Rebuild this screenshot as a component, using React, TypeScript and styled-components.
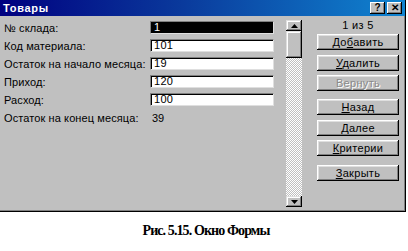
import React from "react";
import styled, { createGlobalStyle } from "styled-components";

const GlobalStyle = createGlobalStyle`
  body {
    margin: 0;
    background: #ffffff;
    font-family: "Liberation Sans", Arial, sans-serif;
  }
`;

const Page = styled.div`
  width: 408px;
  height: 251px;
  display: flex;
  flex-direction: column;
`;

const Window = styled.div`
  width: 406px;
  height: 212px;
  box-sizing: border-box;
  background: #c0c0c0;
  border-right: 1px solid #000;
  border-bottom: 1px solid #000;
  box-shadow: inset -1px -1px #808080;
  display: flex;
  flex-direction: column;
`;

const TitleBar = styled.div`
  height: 16px;
  flex-shrink: 0;
  background: linear-gradient(to right, #000080 0%, #0a3a9c 45%, #1084d0 100%);
  display: flex;
  align-items: center;
  justify-content: space-between;
  padding: 0 3px 0 3px;
`;

const Title = styled.span`
  color: #fff;
  font-weight: bold;
  font-size: 11px;
  letter-spacing: 0.7px;
`;

const TitleButtons = styled.div`
  display: flex;
  gap: 2px;
`;

const TitleButton = styled.div`
  width: 15px;
  height: 12px;
  box-sizing: border-box;
  background: #c0c0c0;
  box-shadow: inset -1px -1px #000, inset 1px 1px #fff, inset -2px -2px #808080;
  display: flex;
  align-items: center;
  justify-content: center;
  font-size: 10px;
  font-weight: bold;
  line-height: 1;
  color: #000;
`;

const Body = styled.div`
  flex: 1;
  display: flex;
  padding: 4px 0 0 4px;
`;

const Form = styled.div`
  display: grid;
  grid-template-columns: 146px 124px;
  grid-auto-rows: 13px;
  row-gap: 5px;
  margin-top: 1px;
  align-items: center;
  align-content: start;
`;

const Label = styled.span`
  font-size: 11px;
  letter-spacing: 0.1px;
  color: #000;
  white-space: nowrap;
`;

const Value = styled.span`
  font-size: 11px;
  color: #000;
  padding-left: 2px;
`;

const Field = styled.div<{ $selected?: boolean }>`
  height: 13px;
  box-sizing: border-box;
  background: ${(p) => (p.$selected ? "#000" : "#fff")};
  color: ${(p) => (p.$selected ? "#fff" : "#000")};
  border-top: 1px solid #808080;
  border-left: 1px solid #808080;
  border-right: 1px solid #dfdfdf;
  border-bottom: 1px solid #dfdfdf;
  box-shadow: inset 1px 1px #000;
  display: flex;
  align-items: center;
  font-size: 11px;
  line-height: 11px;
  letter-spacing: 0.3px;
  padding-left: 3px;
  white-space: nowrap;
`;

const Scroll = styled.div`
  margin-left: 12px;
  width: 16px;
  height: 187px;
  display: flex;
  flex-direction: column;
  background: repeating-conic-gradient(#c0c0c0 0% 25%, #ffffff 0% 50%) 0 0 / 2px 2px;
`;

const ScrollPart = styled.div<{ $h: number }>`
  height: ${(p) => p.$h}px;
  flex-shrink: 0;
  box-sizing: border-box;
  background: #c0c0c0;
  box-shadow: inset -1px -1px #000, inset 1px 1px #dfdfdf, inset -2px -2px #808080, inset 2px 2px #fff;
  display: flex;
  align-items: center;
  justify-content: center;
`;

const Spacer = styled.div`
  flex: 1;
`;

const Buttons = styled.div`
  margin-left: 15px;
  width: 82px;
  display: flex;
  flex-direction: column;
`;

const Counter = styled.div`
  height: 10px;
  line-height: 10px;
  font-size: 11px;
  letter-spacing: 0.3px;
  text-align: center;
  color: #000;
`;

const Button = styled.div<{ $gap: number; $disabled?: boolean }>`
  margin-top: ${(p) => p.$gap}px;
  height: 16px;
  box-sizing: border-box;
  background: #c0c0c0;
  box-shadow: inset -1px -1px #000, inset 1px 1px #fff, inset -2px -2px #808080, inset 2px 2px #dfdfdf;
  display: flex;
  align-items: center;
  justify-content: center;
  font-size: 11px;
  letter-spacing: 0.3px;
  color: ${(p) => (p.$disabled ? "#8a8a8a" : "#000")};
  text-shadow: ${(p) => (p.$disabled ? "1px 1px #fff" : "none")};
  u {
    text-decoration: underline;
    text-underline-offset: 1px;
  }
`;

const Caption = styled.div`
  margin-top: 11px;
  text-align: center;
  padding-left: 4px;
  font-family: "Liberation Serif", "Times New Roman", serif;
  font-weight: bold;
  font-size: 14px;
  letter-spacing: -0.9px;
  color: #000;
`;

const Arrow = ({ up }: { up?: boolean }) => (
  <svg width="7" height="4" viewBox="0 0 7 4">
    <path d={up ? "M3.5 0 L7 4 L0 4 Z" : "M0 0 L7 0 L3.5 4 Z"} fill="#000" />
  </svg>
);

const fields = [
  { label: "№ склада:", value: "1", selected: true },
  { label: "Код материала:", value: "101" },
  { label: "Остаток на начало месяца:", value: "19" },
  { label: "Приход:", value: "120" },
  { label: "Расход:", value: "100" },
];

const buttons: { pre: string; key: string; post: string; gap: number; disabled?: boolean }[] = [
  { pre: "До", key: "б", post: "авить", gap: 4 },
  { pre: "", key: "У", post: "далить", gap: 5 },
  { pre: "Вернуть", key: "", post: "", gap: 4, disabled: true },
  { pre: "", key: "Н", post: "азад", gap: 8 },
  { pre: "", key: "Д", post: "алее", gap: 5 },
  { pre: "", key: "К", post: "ритерии", gap: 4 },
  { pre: "", key: "З", post: "акрыть", gap: 9 },
];

const App = () => {
  return (
    <Page>
      <GlobalStyle />
      <Window>
        <TitleBar>
          <Title>Товары</Title>
          <TitleButtons>
            <TitleButton>?</TitleButton>
            <TitleButton>✕</TitleButton>
          </TitleButtons>
        </TitleBar>
        <Body>
          <Form>
            {fields.map((f) => (
              <React.Fragment key={f.label}>
                <Label>{f.label}</Label>
                <Field $selected={f.selected}>{f.value}</Field>
              </React.Fragment>
            ))}
            <Label>Остаток на конец месяца:</Label>
            <Value>39</Value>
          </Form>
          <Scroll>
            <ScrollPart $h={11}>
              <Arrow up />
            </ScrollPart>
            <ScrollPart $h={27} />
            <Spacer />
            <ScrollPart $h={11}>
              <Arrow />
            </ScrollPart>
          </Scroll>
          <Buttons>
            <Counter>1 из 5</Counter>
            {buttons.map((b) => (
              <Button key={b.pre + b.key + b.post} $gap={b.gap} $disabled={b.disabled}>
                <span>
                  {b.pre}
                  {b.key ? <u>{b.key}</u> : null}
                  {b.post}
                </span>
              </Button>
            ))}
          </Buttons>
        </Body>
      </Window>
      <Caption>Рис. 5.15. Окно Формы</Caption>
    </Page>
  );
};

export default App;
